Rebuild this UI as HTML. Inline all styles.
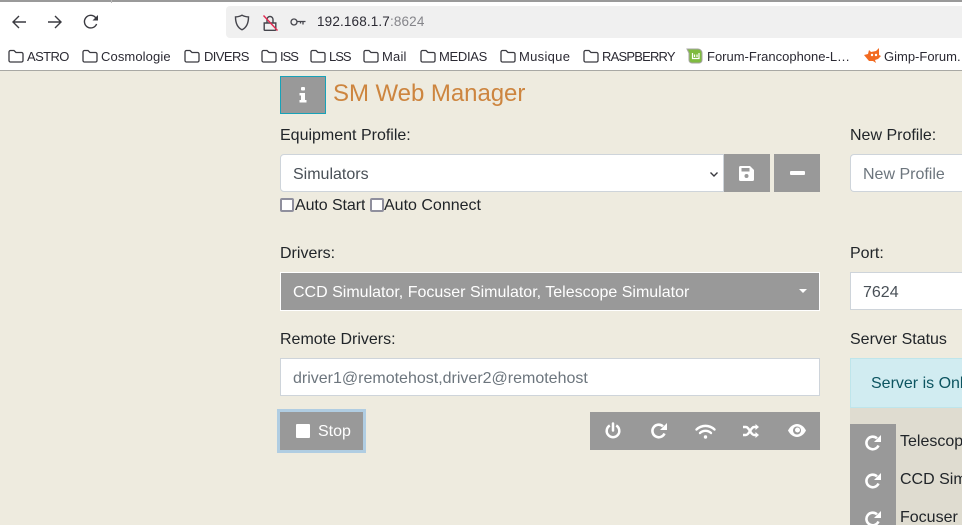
<!DOCTYPE html>
<html>
<head>
<meta charset="utf-8">
<style>
html,body{margin:0;padding:0;width:962px;height:525px;overflow:hidden;background:#eeebdf;font-family:"Liberation Sans",sans-serif;}
*{box-sizing:border-box;}
#page{position:relative;width:962px;height:525px;overflow:hidden;}
.a{position:absolute;white-space:nowrap;}
svg{position:absolute;display:block;overflow:visible;}
#bar{position:absolute;left:0;top:0;width:962px;height:71px;background:#fff;border-top:2px solid #9a9a9a;border-bottom:1px solid #a8a8a4;}
.bm{position:absolute;top:49px;font-size:13px;line-height:16px;color:#2b2a33;white-space:nowrap;}
.fo{position:absolute;top:49px;width:16px;height:14px;}
.lb{position:absolute;font-size:16px;line-height:20px;color:#212529;white-space:nowrap;overflow:hidden;}
.btn{position:absolute;background:#999;}
.input{position:absolute;background:#fff;border:1px solid #ced4da;font-size:16px;color:#495057;white-space:nowrap;overflow:hidden;}
</style>
</head>
<body>
<div id="page">
<div id="bar"></div>
<div class="a" style="left:111px;top:0;width:1px;height:3px;background:#bbb"></div>

<!-- nav icons -->
<svg style="left:11px;top:14px" width="16" height="16" viewBox="0 0 16 16" fill="none" stroke="#3a3a40" stroke-width="1.4"><path d="M15 8H2M8 2L2 8l6 6"/></svg>
<svg style="left:47px;top:14px" width="16" height="16" viewBox="0 0 16 16" fill="none" stroke="#3a3a40" stroke-width="1.4"><path d="M1 8h13M8 2l6 6-6 6"/></svg>
<svg style="left:83px;top:14px" width="16" height="16" viewBox="0 0 16 16" fill="none" stroke="#3a3a40" stroke-width="1.4"><path d="M13.600 10A6.300 6.300 0 1 1 12.400 3.400L14.500 5"/><path d="M15 1v5.500H9.500z" fill="#3a3a40" stroke="none"/></svg>

<!-- url bar -->
<div class="a" style="left:226px;top:6px;width:736px;height:32px;background:#f0f0f0;border-radius:4px 0 0 4px"></div>
<svg style="left:234px;top:14px" width="16" height="17" viewBox="0 0 16 17" fill="none" stroke="#45454c" stroke-width="1.4"><path d="M8 1.200c2 1.200 4 1.600 6.500 1.700 0 6-1.500 10.500-6.500 12.900C3 13.400 1.500 8.900 1.500 2.900 4 2.800 6 2.400 8 1.200z"/></svg>
<svg style="left:263px;top:15px" width="15" height="16" viewBox="0 0 15 16" fill="none"><path d="M1.200 8h11.600v6.800a.5.5 0 0 1-.5.5H1.700a.5.5 0 0 1-.5-.5zM4 8V4.500a3 3 0 0 1 6 0V8" stroke="#45454c" stroke-width="1.4"/><path d="M0.500 0.500L14.500 15.500" stroke="#e22850" stroke-width="1.400"/></svg>
<svg style="left:290px;top:17px" width="16" height="10" viewBox="0 0 16 10" fill="none" stroke="#45454c" stroke-width="1.3"><circle cx="4" cy="5" r="3"/><path d="M7 4.500h8.500M13 4.500v3M10.500 4.500v2"/></svg>
<div class="a" style="left:317px;top:14px;font-size:13.500px;line-height:16px;letter-spacing:.15px;color:#2b2a33">192.168.1.7<span style="color:#85858a">:8624</span></div>

<!-- bookmarks -->
<svg style="width:0;height:0"><defs><symbol id="f" viewBox="0 0 16 14"><path d="M1 3a1.500 1.500 0 0 1 1.500-1.500h3.500l2 2h5.500A1.500 1.500 0 0 1 15 5v6.500a1.500 1.500 0 0 1-1.500 1.500h-11A1.500 1.500 0 0 1 1 11.500z" fill="none" stroke="#3a3a40" stroke-width="1.300"/></symbol></defs></svg>
<svg class="fo" style="left:8px"><use href="#f"/></svg><div class="bm" style="left:27px;letter-spacing:-.6px">ASTRO</div>
<svg class="fo" style="left:82px"><use href="#f"/></svg><div class="bm" style="left:101px;letter-spacing:.1px">Cosmologie</div>
<svg class="fo" style="left:184px"><use href="#f"/></svg><div class="bm" style="left:204px;letter-spacing:-.6px">DIVERS</div>
<svg class="fo" style="left:261px"><use href="#f"/></svg><div class="bm" style="left:280px;letter-spacing:-1px">ISS</div>
<svg class="fo" style="left:310px"><use href="#f"/></svg><div class="bm" style="left:329px;letter-spacing:-1px">LSS</div>
<svg class="fo" style="left:363px"><use href="#f"/></svg><div class="bm" style="left:382px;letter-spacing:.2px">Mail</div>
<svg class="fo" style="left:420px"><use href="#f"/></svg><div class="bm" style="left:439px;letter-spacing:-.3px">MEDIAS</div>
<svg class="fo" style="left:500px"><use href="#f"/></svg><div class="bm" style="left:519px;letter-spacing:.3px">Musique</div>
<svg class="fo" style="left:583px"><use href="#f"/></svg><div class="bm" style="left:602px;letter-spacing:-.8px">RASPBERRY</div>
<svg style="left:686px;top:48px" width="17" height="16" viewBox="0 0 17 16"><path d="M1 1h11a4 4 0 0 1 4 4v7a3 3 0 0 1-3 3H6a3 3 0 0 1-3-3V5z" fill="#7fbb3f" stroke="#a5a5a0"/><path d="M6.500 5v5.500h6.500V5M8.500 9V6.500M11 9V6.500" fill="none" stroke="#fff" stroke-width="1.200"/></svg>
<div class="bm" style="left:707px">Forum-Francophone-L…</div>
<svg style="left:864px;top:47px" width="17" height="17" viewBox="0 0 17 17"><path d="M0 8l4-1 1-4 2 2 5-1 3-3 0 7 2 1-3 3-3 1 1 3-3-2-4 0z" fill="#f26a21"/><circle cx="8" cy="8" r="1.200" fill="#fff"/><circle cx="12" cy="8" r="1.200" fill="#fff"/></svg>
<div class="bm" style="left:884px;width:78px;overflow:hidden">Gimp-Forum.</div>

<!-- heading -->
<div class="a" style="left:280px;top:76px;width:46px;height:38px;background:#999;border:1px solid #17a2b8"></div>
<svg style="left:299px;top:87px" width="8" height="16" viewBox="0 0 8 16" fill="#fff"><rect x="2" y="0" width="4" height="3.500" rx="1"/><path d="M0.500 6h5.500v7h1.500v2.500H0.500V13H2V8.500H0.500z"/></svg>
<div class="a" style="left:333px;top:79px;font-size:24px;line-height:29px;letter-spacing:-.05px;color:#cd853f">SM Web Manager</div>

<!-- Equipment profile -->
<div class="lb" style="left:280px;top:126px">Equipment Profile:</div>
<div class="input" style="left:280px;top:154px;width:444px;height:38px;border-radius:4px 0 0 4px;padding:10px 12px 6px;line-height:20px">Simulators</div>
<svg style="left:710px;top:172px" width="8" height="5" viewBox="0 0 8 5" fill="none" stroke="#3a3a40" stroke-width="1.400"><path d="M.5.500l3.500 3.500L7.500.500"/></svg>
<div class="btn" style="left:724px;top:154px;width:46px;height:38px"></div>
<svg style="left:739px;top:166px" width="15" height="15" viewBox="0 0 15 15"><path d="M1.500 0H11l4 4v9.500a1.500 1.500 0 0 1-1.500 1.500h-12A1.500 1.500 0 0 1 0 13.500v-12A1.500 1.500 0 0 1 1.500 0z" fill="#fff"/><rect x="2.500" y="2" width="8" height="3.500" fill="#999"/><circle cx="7.500" cy="10" r="2" fill="#999"/></svg>
<div class="btn" style="left:774px;top:154px;width:46px;height:38px"></div>
<div class="a" style="left:790px;top:171px;width:15px;height:4px;background:#fff;border-radius:1px"></div>

<div class="a" style="left:280px;top:198px;width:14px;height:14px;background:#fff;border:2px solid #8f8f9d;border-radius:2px"></div>
<div class="lb" style="left:295px;top:196px;letter-spacing:-.08px">Auto Start</div>
<div class="a" style="left:370px;top:198px;width:14px;height:14px;background:#fff;border:2px solid #8f8f9d;border-radius:2px"></div>
<div class="lb" style="left:384px;top:196px">Auto Connect</div>

<!-- New profile -->
<div class="lb" style="left:850px;top:126px">New Profile:</div>
<div class="input" style="left:850px;top:154px;width:112px;height:38px;border-right:0;border-radius:4px 0 0 4px;padding:10px 0 6px 12px;line-height:20px;color:#6c757d">New Profile</div>

<!-- Drivers -->
<div class="lb" style="left:280px;top:244px">Drivers:</div>
<div class="a" style="left:280px;top:272px;width:540px;height:39px;background:#999;border:1px solid #fff;color:#fff;font-size:16px;line-height:20px;padding:10px 12px 7px">CCD Simulator, Focuser Simulator, Telescope Simulator</div>
<div class="a" style="left:799px;top:289px;width:0;height:0;border-left:4px solid transparent;border-right:4px solid transparent;border-top:4px solid #fff"></div>

<!-- Port -->
<div class="lb" style="left:850px;top:244px">Port:</div>
<div class="input" style="left:850px;top:272px;width:112px;height:38px;border-right:0;padding:10px 0 6px 12px;line-height:20px">7624</div>

<!-- Remote -->
<div class="lb" style="left:280px;top:330px">Remote Drivers:</div>
<div class="input" style="left:280px;top:358px;width:540px;height:38px;padding:10px 12px 6px;line-height:20px;color:#6c757d">driver1@remotehost,driver2@remotehost</div>

<!-- Stop -->
<div class="a" style="left:277px;top:409px;width:89px;height:44px;background:#b0cde2"></div>
<div class="btn" style="left:280px;top:412px;width:83px;height:38px"></div>
<div class="a" style="left:296px;top:424px;width:14px;height:14px;background:#fff;border-radius:1px"></div>
<div class="a" style="left:318px;top:422px;font-size:16px;line-height:20px;color:#fff">Stop</div>

<!-- Toolbar -->
<div class="btn" style="left:590px;top:412px;width:230px;height:38px"></div>
<svg style="left:605px;top:423px" width="16" height="16" viewBox="0 0 16 16" fill="none" stroke="#fff" stroke-width="2.500"><path d="M4.800 2.500a6.300 6.300 0 1 0 6.400 0"/><path d="M8 0.500v7" stroke-linecap="round"/></svg>
<svg style="left:651px;top:423px" width="16" height="16" viewBox="0 0 16 16"><path d="M13.500 10.500A6.300 6.300 0 1 1 12 3.300" fill="none" stroke="#fff" stroke-width="2.600"/><path d="M16 0v7H9z" fill="#fff"/></svg>
<svg style="left:695px;top:424px" width="21" height="15" viewBox="0 0 21 15" fill="none" stroke="#fff" stroke-width="2.400" stroke-linecap="round"><path d="M1.500 5.500a13 13 0 0 1 18 0"/><path d="M5 9a8 8 0 0 1 11 0"/><circle cx="10.500" cy="13" r="1.200" fill="#fff" stroke-width="1"/></svg>
<svg style="left:743px;top:424px" width="16" height="14" viewBox="0 0 16 14" fill="none" stroke="#fff" stroke-width="2.400"><path d="M0 3h3c3 0 5 8 8 8h2M0 11h3c3 0 5-8 8-8h2"/><path d="M12.500 0L16 3l-3.500 3zM12.500 8l3.500 3-3.500 3z" fill="#fff" stroke="none"/></svg>
<svg style="left:788px;top:424px" width="18" height="13" viewBox="0 0 18 13"><path d="M0 6.500C2 2.500 5.500 0 9 0s7 2.500 9 6.500C16 10.500 12.500 13 9 13S2 10.500 0 6.500z" fill="#fff"/><circle cx="9" cy="6.500" r="4" fill="#999"/><circle cx="9.500" cy="6" r="2.500" fill="#fff"/></svg>

<!-- Server status -->
<div class="lb" style="left:850px;top:330px">Server Status</div>
<div class="a" style="left:850px;top:358px;width:112px;height:50px;background:#d1ecf1;border:1px solid #bee5eb;border-right:0;color:#0c5460;font-size:16px;line-height:20px;padding:15px 0 0 20px;overflow:hidden">Server is Online</div>
<div class="a" style="left:850px;top:408px;width:112px;height:117px;background:#dfdcd0"></div>
<div class="btn" style="left:850px;top:424px;width:46px;height:101px"></div>
<svg style="left:865px;top:435px" width="16" height="16" viewBox="0 0 16 16"><path d="M13.500 10.500A6.300 6.300 0 1 1 12 3.300" fill="none" stroke="#fff" stroke-width="2.600"/><path d="M16 0v7H9z" fill="#fff"/></svg>
<svg style="left:865px;top:473px" width="16" height="16" viewBox="0 0 16 16"><path d="M13.500 10.500A6.300 6.300 0 1 1 12 3.300" fill="none" stroke="#fff" stroke-width="2.600"/><path d="M16 0v7H9z" fill="#fff"/></svg>
<div class="a" style="left:850px;top:505px;width:46px;height:20px;overflow:hidden"><svg style="left:15px;top:6px" width="16" height="16" viewBox="0 0 16 16"><path d="M13.500 10.500A6.300 6.300 0 1 1 12 3.300" fill="none" stroke="#fff" stroke-width="2.600"/><path d="M16 0v7H9z" fill="#fff"/></svg></div>
<div class="lb" style="left:900px;top:432px;width:62px">Telescope Simulator</div>
<div class="lb" style="left:900px;top:470px;width:62px">CCD Simulator</div>
<div class="lb" style="left:900px;top:508px;width:62px">Focuser Simulator</div>
</div>
</body>
</html>
